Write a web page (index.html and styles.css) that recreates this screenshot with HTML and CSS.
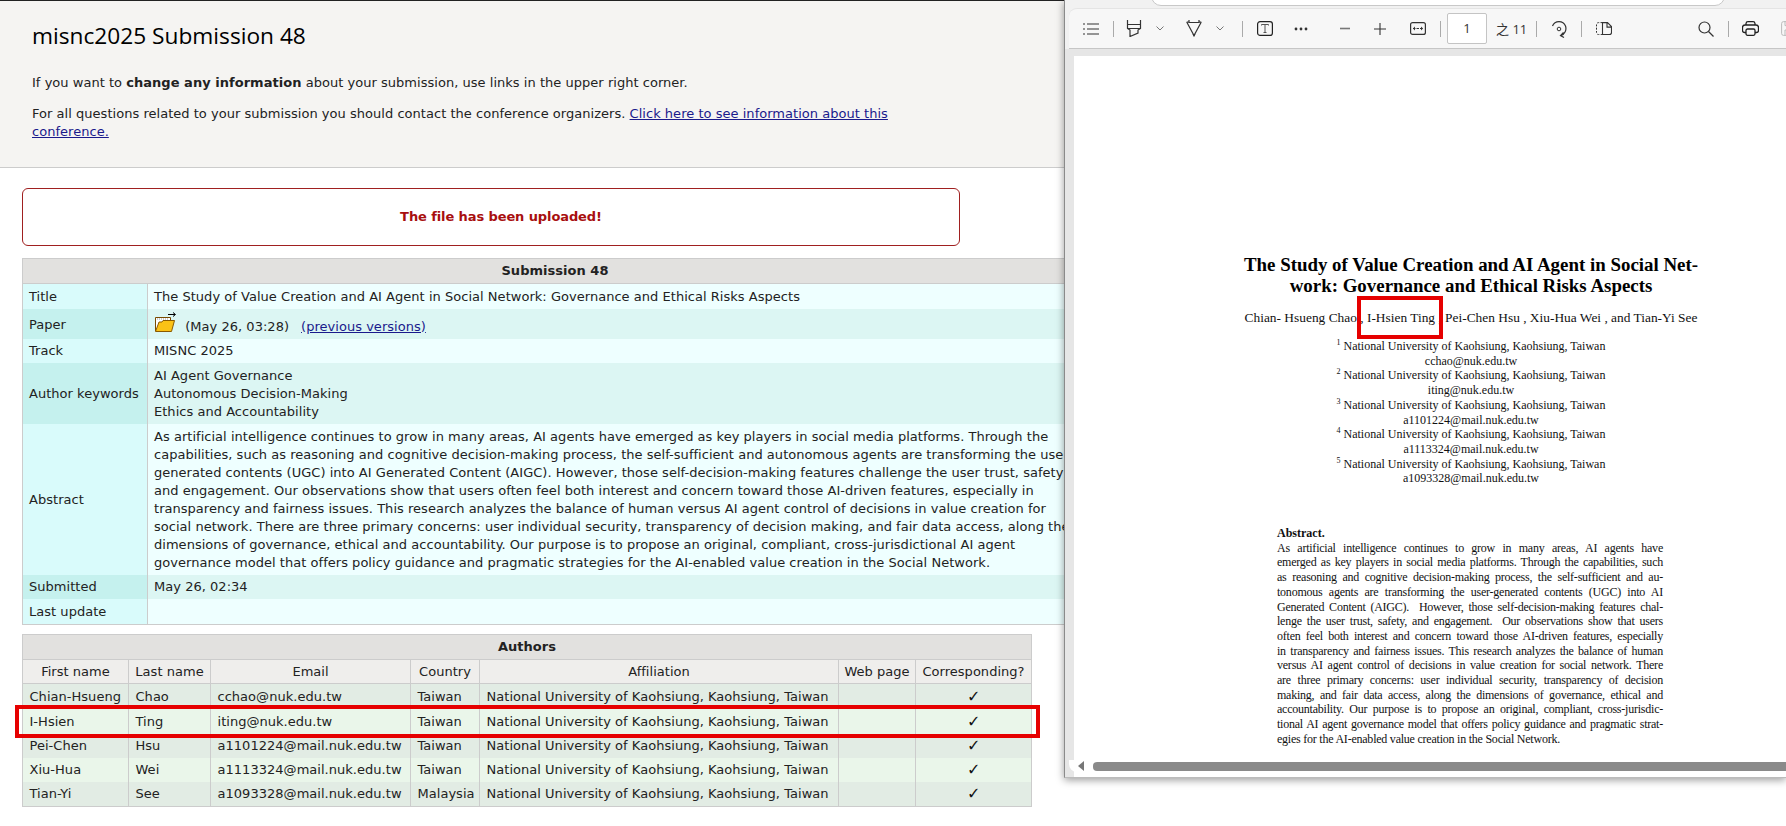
FILE: index.html
```html
<!DOCTYPE html>
<html lang="en">
<head>
  <meta charset="UTF-8" />
  <title>misnc2025 Submission 48</title>
  <link rel="stylesheet" href="styles.css">
</head>
<body>

  <header class="page-head">
    <h1>misnc2025 Submission 48</h1>
    <p>If you want to <b>change any information</b> about your submission, use links in the upper right corner.</p>
    <p>For all questions related to your submission you should contact the conference organizers. <a href="#">Click here to see information about this conference.</a></p>
  </header>

  <div class="upload-msg">The file has been uploaded!</div>

  <table class="info">
    <colgroup><col class="info-label"><col class="info-value"></colgroup>
    <tr><th colspan="2" class="title-row">Submission 48</th></tr>
    <tr class="light"><td class="label">Title</td><td>The Study of Value Creation and AI Agent in Social Network: Governance and Ethical Risks Aspects</td></tr>
    <tr class="dark paper-row"><td class="label">Paper</td><td>
      <svg class="folder" width="24" height="24" viewBox="0 0 24 24">
        <path d="M14 3.500h7M19 1.500l2.500 2-2.500 2" fill="none" stroke="#000" stroke-width="1"/>
        <path d="M1.500 20V6.500h15V10" fill="#fff" stroke="#7a4a00" stroke-width="1"/>
        <path d="M3 8h12" stroke="#999" stroke-width="1" stroke-dasharray="1 1"/>
        <path d="M1.500 20.500 5 11h3l1-1.500h11.500l-3 11z" fill="#fbc216" stroke="#8a5a00" stroke-width="1"/>
      </svg>
      <span class="paper-date">(May 26, 03:28)</span><a href="#">(previous versions)</a></td></tr>
    <tr class="light short"><td class="label">Track</td><td>MISNC 2025</td></tr>
    <tr class="dark"><td class="label">Author keywords</td><td>AI Agent Governance<br>Autonomous Decision-Making<br>Ethics and Accountability</td></tr>
    <tr class="light"><td class="label">Abstract</td><td class="abstract">As artificial intelligence continues to grow in many areas, AI agents have emerged as key players in social media platforms. Through the<br>capabilities, such as reasoning and cognitive decision-making process, the self-sufficient and autonomous agents are transforming the user-<br>generated contents (UGC) into AI Generated Content (AIGC). However, those self-decision-making features challenge the user trust, safety,<br>and engagement. Our observations show that users often feel both interest and concern toward those AI-driven features, especially in<br>transparency and fairness issues. This research analyzes the balance of human versus AI agent control of decisions in value creation for<br>social network. There are three primary concerns: user individual security, transparency of decision making, and fair data access, along the<br>dimensions of governance, ethical and accountability. Our purpose is to propose an original, compliant, cross-jurisdictional AI agent<br>governance model that offers policy guidance and pragmatic strategies for the AI-enabled value creation in the Social Network.</td></tr>
    <tr class="dark short"><td class="label">Submitted</td><td>May 26, 02:34</td></tr>
    <tr class="light"><td class="label">Last update</td><td></td></tr>
  </table>

  <table class="authors">
    <colgroup>
      <col class="c-first"><col class="c-last"><col class="c-email"><col class="c-country"><col class="c-aff"><col class="c-web"><col class="c-corr">
    </colgroup>
    <tr><th colspan="7" class="title-row">Authors</th></tr>
    <tr class="col-head"><td>First name</td><td>Last name</td><td>Email</td><td>Country</td><td>Affiliation</td><td>Web page</td><td>Corresponding?</td></tr>
    <tr class="odd"><td>Chian-Hsueng</td><td>Chao</td><td>cchao@nuk.edu.tw</td><td>Taiwan</td><td>National University of Kaohsiung, Kaohsiung, Taiwan</td><td></td><td class="tick">✓</td></tr>
    <tr class="even"><td>I-Hsien</td><td>Ting</td><td>iting@nuk.edu.tw</td><td>Taiwan</td><td>National University of Kaohsiung, Kaohsiung, Taiwan</td><td></td><td class="tick">✓</td></tr>
    <tr class="odd short"><td>Pei-Chen</td><td>Hsu</td><td>a1101224@mail.nuk.edu.tw</td><td>Taiwan</td><td>National University of Kaohsiung, Kaohsiung, Taiwan</td><td></td><td class="tick">✓</td></tr>
    <tr class="even short"><td>Xiu-Hua</td><td>Wei</td><td>a1113324@mail.nuk.edu.tw</td><td>Taiwan</td><td>National University of Kaohsiung, Kaohsiung, Taiwan</td><td></td><td class="tick">✓</td></tr>
    <tr class="odd short"><td>Tian-Yi</td><td>See</td><td>a1093328@mail.nuk.edu.tw</td><td>Malaysia</td><td>National University of Kaohsiung, Kaohsiung, Taiwan</td><td></td><td class="tick">✓</td></tr>
  </table>

  <!-- red marker over the second author row -->
  <div class="mark mark-row"></div>

  <!-- pdf viewer window lying over the page -->
  <section class="viewer">
    <div class="find-pill"></div>
    <div class="toolbar">
      <svg class="ic t-list" width="16" height="12" viewBox="0 0 16 12"><path d="M0 1h2M4 1h12M0 6h2M4 6h12M0 11h2M4 11h12" stroke="#333" stroke-width="1.200" fill="none"/></svg>
      <i class="sep s1"></i>
      <svg class="ic t-hl" width="16" height="17" viewBox="0 0 16 17"><path d="M1.500 0v4.500h13V0M1.500 4.500v4l2.500 1.500v6.500l8-3.500v-3l2.500-1.500v-4M1.500 8.500h13" stroke="#333" stroke-width="1.200" fill="none"/></svg>
      <svg class="ic t-chev1" width="8" height="5" viewBox="0 0 8 5"><path d="M.5.500 4 4 7.500.5" stroke="#777" fill="none"/></svg>
      <svg class="ic t-pen" width="16" height="17" viewBox="0 0 16 17"><path d="M0.700 2 8 15.500 15.300 2M0.700 2h2.500M15.300 2h-2.500M3 0v2.500h10V0" stroke="#333" stroke-width="1.200" fill="none"/><path d="M6.500 14h3L8 17z" fill="#333"/></svg>
      <svg class="ic t-chev2" width="8" height="5" viewBox="0 0 8 5"><path d="M.5.500 4 4 7.500.5" stroke="#777" fill="none"/></svg>
      <i class="sep s2"></i>
      <svg class="ic t-text" width="16" height="15" viewBox="0 0 16 15"><rect x=".6" y=".6" width="14.800" height="13.800" rx="2.500" stroke="#222" stroke-width="1.200" fill="none"/><path d="M4.500 4.500v-1h7v1M8 3.500v8M6.500 11.500h3" stroke="#555" fill="none"/></svg>
      <svg class="ic t-dots" width="14" height="4" viewBox="0 0 14 4"><circle cx="2" cy="2" r="1.400" fill="#333"/><circle cx="7" cy="2" r="1.400" fill="#333"/><circle cx="12" cy="2" r="1.400" fill="#333"/></svg>
      <svg class="ic t-minus" width="10" height="3" viewBox="0 0 10 3"><path d="M0 1.500h10" stroke="#777" stroke-width="1.600"/></svg>
      <svg class="ic t-plus" width="12" height="12" viewBox="0 0 12 12"><path d="M0 6h12M6 0v12" stroke="#333" stroke-width="1.100"/></svg>
      <svg class="ic t-fit" width="16" height="13" viewBox="0 0 16 13"><rect x=".6" y=".6" width="14.800" height="11.800" rx="2" stroke="#333" stroke-width="1.200" fill="none"/><path d="M3 6.500h10" stroke="#333" stroke-dasharray="2.500 1"/><path d="M5 4.500v4L3 6.500zM11 4.500v4l2-2z" fill="#333"/></svg>
      <i class="sep s3"></i>
      <span class="page-input">1</span>
      <span class="page-count">之 11</span>
      <i class="sep s4"></i>
      <svg class="ic t-rotate" width="16" height="18" viewBox="0 0 16 18"><path d="M1.500 6A7 7 0 0 1 14.500 6 7.500 7.500 0 0 1 10 15.500M12.500 12.500 9.500 15.500 13 17.500" stroke="#333" stroke-width="1.200" fill="none"/><circle cx="8" cy="9" r="1.800" stroke="#333" fill="none"/></svg>
      <i class="sep s5"></i>
      <svg class="ic t-page" width="16" height="13" viewBox="0 0 16 13"><path d="M6.500.6H2.500a2 2 0 0 0-2 2v8a2 2 0 0 0 2 2h4" stroke="#333" stroke-dasharray="2 1.300" fill="none"/><path d="M6.500.6h5l4 4v6a2 2 0 0 1-2 2h-7zM11 .6v4.500h4.500" stroke="#333" stroke-width="1.100" fill="none"/></svg>
      <svg class="ic t-search" width="16" height="16" viewBox="0 0 16 16"><circle cx="6.500" cy="6.500" r="5.500" stroke="#333" stroke-width="1.200" fill="none"/><path d="M10.500 10.500 15.500 15.500" stroke="#333" stroke-width="1.200"/></svg>
      <i class="sep s6"></i>
      <svg class="ic t-print" width="17" height="15" viewBox="0 0 17 15"><path d="M4 4V2.500A2 2 0 0 1 6 .7h5a2 2 0 0 1 2 1.800V4M4 11.500H2.500a2 2 0 0 1-2-2v-3a2.500 2.500 0 0 1 2.500-2.500h11a2.500 2.500 0 0 1 2.500 2.500v3a2 2 0 0 1-2 2H13" stroke="#222" stroke-width="1.300" fill="none"/><rect x="4" y="8" width="9" height="6.300" rx="1.500" stroke="#222" stroke-width="1.300" fill="none"/></svg>
      <svg class="ic t-save" width="16" height="15" viewBox="0 0 16 15"><rect x=".6" y=".6" width="14" height="13.800" rx="2" stroke="#bbb" fill="none"/><path d="M4 .6v4h7v-4M4 14v-5h7v5" stroke="#bbb" fill="none"/></svg>
    </div>
    <div class="doc-area">
      <article class="pdf-page">
        <h2 class="doc-title">The Study of Value Creation and AI Agent in Social Net-<br>work: Governance and Ethical Risks Aspects</h2>
        <p class="doc-authors">Chian- Hsueng Chao , I-Hsien Ting , Pei-Chen Hsu , Xiu-Hua Wei , and Tian-Yi See</p>
        <p class="doc-aff">
          <sup>1</sup> National University of Kaohsiung, Kaohsiung, Taiwan<br>cchao@nuk.edu.tw<br>
          <sup>2</sup> National University of Kaohsiung, Kaohsiung, Taiwan<br>iting@nuk.edu.tw<br>
          <sup>3</sup> National University of Kaohsiung, Kaohsiung, Taiwan<br>a1101224@mail.nuk.edu.tw<br>
          <sup>4</sup> National University of Kaohsiung, Kaohsiung, Taiwan<br>a1113324@mail.nuk.edu.tw<br>
          <sup>5</sup> National University of Kaohsiung, Kaohsiung, Taiwan<br>a1093328@mail.nuk.edu.tw
        </p>
        <div class="doc-abstract">
          <b>Abstract.</b>
          <span>As artificial intelligence continues to grow in many areas, AI agents have</span>
          <span>emerged as key players in social media platforms. Through the capabilities, such</span>
          <span>as reasoning and cognitive decision-making process, the self-sufficient and au-</span>
          <span>tonomous agents are transforming the user-generated contents (UGC) into AI</span>
          <span>Generated Content (AIGC).  However, those self-decision-making features chal-</span>
          <span>lenge the user trust, safety, and engagement.  Our observations show that users</span>
          <span>often feel both interest and concern toward those AI-driven features, especially</span>
          <span>in transparency and fairness issues. This research analyzes the balance of human</span>
          <span>versus AI agent control of decisions in value creation for social network. There</span>
          <span>are three primary concerns: user individual security, transparency of decision</span>
          <span>making, and fair data access, along the dimensions of governance, ethical and</span>
          <span>accountability. Our purpose is to propose an original, compliant, cross-jurisdic-</span>
          <span>tional AI agent governance model that offers policy guidance and pragmatic strat-</span>
          <span class="last">egies for the AI-enabled value creation in the Social Network.</span>
        </div>
      </article>
      <div class="mark mark-name"></div>
    </div>
    <div class="h-scroll">
      <svg class="h-arrow" width="6" height="10" viewBox="0 0 6 10"><path d="M6 0v10L0 5z" fill="#777"/></svg>
      <div class="h-thumb"></div>
    </div>
  </section>

</body>
</html>
```

FILE: styles.css
```css
body {
  margin: 0;
  height: 826px;
  overflow: hidden;
  position: relative;
  background: #fff;
  color: #222;
  font-family: "DejaVu Sans", Verdana, sans-serif;
  font-size: 13px;
  line-height: 18px;
  letter-spacing: 0.03px;
}
a { color: #1a1a8c; }

.page-head {
  height: 168px;
  box-sizing: border-box;
  padding: 20px 32px 0;
  background: #f5f4f2;
  border-top: 1px solid #222;
  border-bottom: 1px solid #ccc;
}
.page-head h1 {
  margin: 0 0 23px;
  font-family: "Open Sans", sans-serif;
  font-size: 22.7px;
  font-weight: normal;
  line-height: 30px;
  letter-spacing: 0;
  color: #000;
}
.page-head p { margin: 0 0 13px; max-width: 880px; }

.upload-msg {
  width: 916px;
  height: 56px;
  margin: 20px 0 12px 22px;
  padding-left: 20px;
  border: 1px solid #a02020;
  border-radius: 6px;
  display: flex;
  align-items: center;
  justify-content: center;
  color: #a80f0f;
  font-weight: bold;
  letter-spacing: -0.1px;
}

table {
  border-collapse: collapse;
  table-layout: fixed;
  margin-left: 22px;
}
td, th {
  border: 1px solid #ccc;
  padding: 3.5px 6px;
  white-space: nowrap;
  overflow: hidden;
}
.short td { padding-top: 3px; padding-bottom: 3px; }
.title-row { background: #e2e1df; font-weight: bold; padding: 3px; text-align: center; }

.info { width: 1066px; }
.info-label { width: 125px; }
.info td { border-width: 0; border-left: 1px solid #ccc; }
.info tr:last-child td { border-bottom: 1px solid #ccc; }
.info .label { padding-right: 0; }
.light .label { background: #d9fbfb; }
.light td { background: #eeffff; }
.dark .label { background: #c5f1ee; }
.dark td { background: #dcf6f3; }
.paper-row td { padding-top: 0; padding-bottom: 2px; height: 28px; }
.paper-row .label { padding-top: 2px; padding-bottom: 0; }
.folder { vertical-align: -4px; margin: 0 3px 0 0; }
.paper-date { margin-right: 12px; }

.authors { width: 1010px; margin-top: 9px; }
.authors td { border-width: 0 1px 0 1px; padding-left: 6.5px; }
.authors tr:last-child td { border-bottom: 1px solid #ccc; }
.c-first { width: 106px; }
.c-last { width: 82px; }
.c-email { width: 200px; }
.c-country { width: 69px; }
.c-aff { width: 359px; }
.c-web { width: 77px; }
.c-corr { width: 116px; }
.col-head td { background: #efeeec; text-align: center; padding: 2.5px 2px; border-bottom: 1px solid #ccc; }
.odd td { background: #e2ece4; }
.even td { background: #eaf6ea; }
.authors .tick { text-align: center; font-size: 16px; line-height: 14px; color: #111; }

.mark { position: absolute; border: 4px solid #e60000; box-sizing: border-box; }
.mark-row { left: 15px; top: 705px; width: 1025px; height: 33px; }

.viewer {
  position: absolute;
  left: 1064px;
  top: 0;
  width: 722px;
  height: 778px;
  box-sizing: border-box;
  border-left: 1px solid #8a8a8a;
  border-bottom: 1px solid #bbb;
  background: #f1f1f1;
  box-shadow: 0 2px 8px rgba(0, 0, 0, 0.4);
  overflow: hidden;
  display: flex;
  flex-direction: column;
  letter-spacing: 0;
}
.find-pill {
  position: absolute;
  left: 86px;
  top: -20px;
  width: 572px;
  height: 24px;
  background: #fff;
  border: 1px solid #c8c8c8;
  border-radius: 10px;
}
.toolbar {
  flex: none;
  height: 41px;
  margin: 8px 0 0 4px;
  background: #f7f7f7;
  border-top: 1px solid #e4e4e4;
  border-bottom: 1px solid #c6c6c6;
  border-radius: 8px 0 0 0;
  box-sizing: border-box;
  display: flex;
  align-items: center;
  white-space: nowrap;
}
.ic { flex: none; }
.sep { flex: none; width: 1px; height: 16px; background: #aaa; }
.t-list { margin-left: 14px; }
.s1 { margin-left: 14px; }
.t-hl { margin-left: 12px; }
.t-chev1 { margin-left: 14px; }
.t-pen { margin-left: 22px; }
.t-chev2 { margin-left: 14px; }
.s2 { margin-left: 18px; }
.t-text { margin-left: 14px; }
.t-dots { margin-left: 21px; }
.t-minus { margin-left: 32px; }
.t-plus { margin-left: 24px; }
.t-fit { margin-left: 24px; }
.s3 { margin-left: 14px; }
.page-input {
  flex: none;
  width: 40px;
  height: 31px;
  margin-left: 6px;
  box-sizing: border-box;
  background: #fff;
  border: 1px solid #c4c4c4;
  border-radius: 2px;
  text-align: center;
  line-height: 29px;
}
.page-input, .page-count {
  font-family: "Open Sans", "Noto Sans CJK TC", sans-serif;
  font-size: 13px;
  color: #333;
}
.page-count { flex: none; width: 27px; margin-left: 9px; }
.s4 { margin-left: 13px; }
.t-rotate { margin-left: 14px; }
.s5 { margin-left: 14px; }
.t-page { margin-left: 14px; }
.t-search { margin-left: 86px; }
.s6 { margin-left: 14px; }
.t-print { margin-left: 13px; }
.t-save { margin-left: 22px; }

.doc-area {
  flex: 1;
  position: relative;
  padding: 7px 0 0 9px;
  background: #e6e6e6;
  min-height: 0;
}
.pdf-page {
  height: 100%;
  box-sizing: border-box;
  padding-top: 198px;
  background: #fff;
  font-family: "Liberation Serif", "Times New Roman", serif;
  color: #111;
  font-size: 12px;
  line-height: 14.7px;
  text-align: center;
  overflow: hidden;
}
.doc-title {
  width: 794px;
  margin: 0;
  font-size: 18.9px;
  line-height: 21px;
  font-weight: bold;
  color: #000;
}
.doc-authors { margin: 13px 0 0; width: 794px; font-size: 13.4px; line-height: 18px; }
.doc-aff { margin: 12px 0 0; width: 794px; }
.doc-aff sup { font-size: 8px; line-height: 0; }
.doc-abstract {
  width: 386px;
  margin: 40px 0 0 203px;
  text-align: justify;
}
.doc-abstract b { display: block; text-align: left; }
.doc-abstract span {
  display: block;
  text-align-last: justify;
  white-space: pre-wrap;
  letter-spacing: -0.23px;
}
.doc-abstract .last { text-align-last: left; }
.mark-name { left: 292px; top: 247px; width: 86px; height: 43px; }
.h-scroll {
  position: absolute;
  left: 4px;
  right: 0;
  top: 760px;
  height: 12px;
  background: #fff;
  border-radius: 0 0 0 8px;
  display: flex;
  align-items: center;
  padding-left: 9px;
}
.h-arrow { flex: none; }
.h-thumb {
  height: 9px;
  width: 900px;
  margin-left: 9px;
  background: #8a8a8a;
  border-radius: 4px;
  flex: none;
}
```
